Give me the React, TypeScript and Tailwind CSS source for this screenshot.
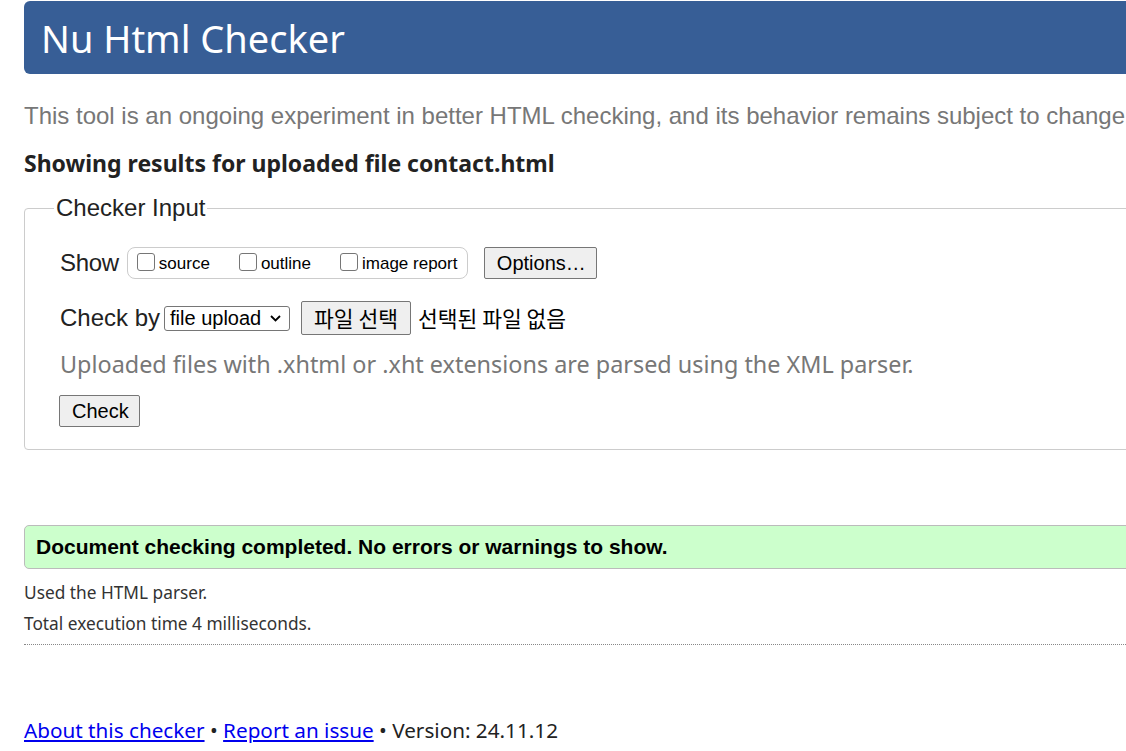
import React from "react";

const malgun = "font-['Noto_Sans','Open_Sans',sans-serif]";
const arial = "font-['Liberation_Sans',Arial,sans-serif]";
const korean = "font-['Noto_Sans_CJK_KR',sans-serif]";

function Checkbox({ label }: { label: string }) {
  return (
    <label className="flex items-end gap-[4px]">
      <span className="mb-[2px] inline-block h-[18px] w-[18px] rounded-[3px] border border-[#767676] bg-white" />
      <span className="text-[17px] leading-[19px] text-black">{label}</span>
    </label>
  );
}

function Btn({ children, className = "" }: { children: React.ReactNode; className?: string }) {
  return (
    <button
      type="button"
      className={`rounded-[2px] border border-[#767676] bg-[#efefef] px-[12px] text-black ${className}`}
    >
      {children}
    </button>
  );
}

export default function App() {
  return (
    <div className="h-[751px] w-[1126px] overflow-hidden bg-white">
      <div className="w-[1200px] pl-[24px] pt-[1px]">
        <h1
          className={`${malgun} flex h-[73px] items-center rounded-l-[6px] bg-[#375e96] pl-[17px] pt-[2px] text-[38px] text-white`}
        >
          Nu Html Checker
        </h1>

        <p className={`${arial} mt-[28px] whitespace-nowrap text-[24px] leading-[28px] text-[#777]`}>
          This tool is an ongoing experiment in better HTML checking, and its behavior remains subject to change
        </p>

        <h2 className={`${malgun} mt-[18px] text-[23px] font-bold leading-[30px] text-[#222]`}>
          Showing results for uploaded file contact.html
        </h2>

        <fieldset className="mt-[16px] rounded-[4px] border border-[#ccc] pb-[22px] pl-[35px]">
          <legend className={`${arial} ml-[-6px] px-[2px] text-[24px] leading-[28px] text-[#222]`}>
            Checker Input
          </legend>

          <div className={`${arial} mt-[25px] flex h-[32px] items-center text-[24px] text-[#222]`}>
            <span className="tracking-[-0.3px]">Show</span>
            <div className="ml-[8px] flex h-[32px] w-[341px] items-center gap-[29px] rounded-[8px] border border-[#ccc] pl-[9px]">
              <Checkbox label="source" />
              <Checkbox label="outline" />
              <Checkbox label="image report" />
            </div>
            <Btn className="ml-[16px] h-[32px] w-[113px] px-0 text-[20px]">Options…</Btn>
          </div>

          <div className={`${arial} mt-[22px] flex h-[34px] items-center text-[24px] text-[#222]`}>
            <span>Check by</span>
            <span className="ml-[4px] flex h-[25px] w-[126px] items-center justify-between rounded-[3px] border border-[#767676] pl-[5px] pr-[8px] text-[20px] text-black">
              file upload
              <svg width="11" height="7" viewBox="0 0 11 7" fill="none" stroke="black" strokeWidth="1.8">
                <path d="M1 1l4.5 4.5L10 1" />
              </svg>
            </span>
            <Btn className={`${korean} ml-[11px] h-[34px] w-[110px] px-0 text-[21.5px]`}>파일 선택</Btn>
            <span className={`${korean} ml-[7px] text-[21.5px] text-black`}>선택된 파일 없음</span>
          </div>

          <p className={`${malgun} mt-[14px] text-[23.4px] leading-[30px] text-[#777]`}>
            Uploaded files with .xhtml or .xht extensions are parsed using the XML parser.
          </p>

          <Btn className={`${arial} ml-[-1px] mt-[16px] h-[32px] w-[81px] px-0 text-[20px]`}>Check</Btn>
        </fieldset>

        <div
          className={`${arial} mt-[75px] flex h-[44px] items-center rounded-l-[5px] border border-[#bbb] bg-[#ccffcc] pl-[11px] text-[21px] font-bold text-black`}
        >
          Document checking completed. No errors or warnings to show.
        </div>

        <div className={`${malgun} text-[17.3px] text-[#333]`}>
          <p className="mt-[13px] leading-[22px]">Used the HTML parser.</p>
          <p className="mt-[9px] leading-[22px]">Total execution time 4 milliseconds.</p>
        </div>

        <div className="mt-[9px] border-t border-dotted border-[#888]" />

        <p className={`${malgun} mt-[71px] text-[20.7px] leading-[28px] text-[#222]`}>
          <a href="#" className="text-[#0000ee] underline">About this checker</a> •{" "}
          <a href="#" className="text-[#0000ee] underline">Report an issue</a> • Version: 24.11.12
        </p>
      </div>
    </div>
  );
}
